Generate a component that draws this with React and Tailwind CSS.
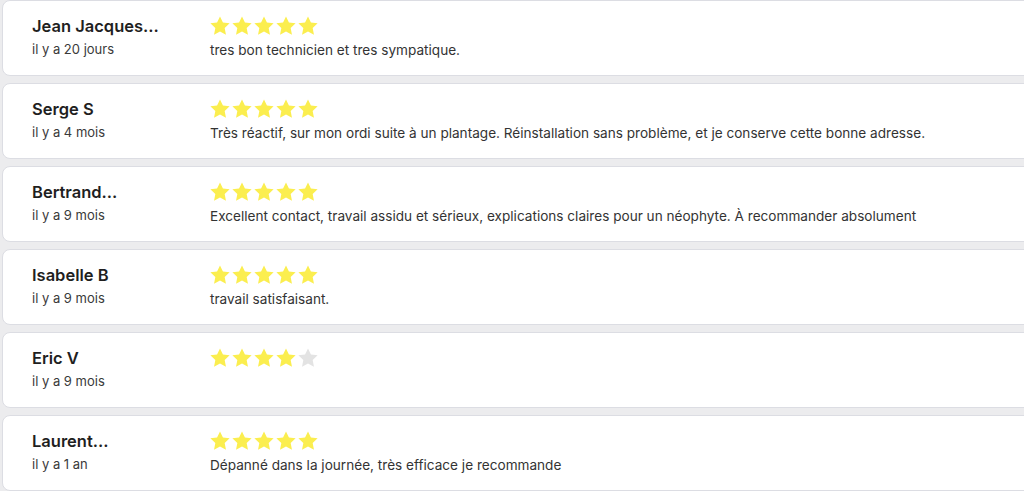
import React from "react";

const reviews = [
  { name: "Jean Jacques...", date: "il y a 20 jours", rating: 5, text: "tres bon technicien et tres sympatique." },
  { name: "Serge S", date: "il y a 4 mois", rating: 5, text: "Très réactif, sur mon ordi suite à un plantage. Réinstallation sans problème, et je conserve cette bonne adresse." },
  { name: "Bertrand...", date: "il y a 9 mois", rating: 5, text: "Excellent contact, travail assidu et sérieux, explications claires pour un néophyte. À recommander absolument" },
  { name: "Isabelle B", date: "il y a 9 mois", rating: 5, text: "travail satisfaisant." },
  { name: "Eric V", date: "il y a 9 mois", rating: 4, text: "" },
  { name: "Laurent...", date: "il y a 1 an", rating: 5, text: "Dépanné dans la journée, très efficace je recommande" },
];

const Star = ({ filled }) => (
  <svg viewBox="0 0 24 24" className="size-[22px]" fill={filled ? "#fbee4f" : "#e3e3e3"}>
    <path d="M12 1.5l3.2 6.7 7.3.9-5.4 5.1 1.4 7.3L12 18l-6.5 3.5 1.4-7.3-5.4-5.1 7.3-.9z" />
  </svg>
);

const App = () => {
  return (
    <div
      className="flex h-[491px] w-[1024px] flex-col gap-[7px] overflow-hidden bg-[#ececee]"
      style={{ fontFamily: "Inter, 'Open Sans', sans-serif" }}
    >
      {reviews.map((r, i) => (
        <div
          key={i}
          className="ml-[2px] -mr-4 flex h-[76px] shrink-0 items-start rounded-lg border border-[#dcdde3] bg-white pl-[29px] pt-[12px]"
        >
          <div className="w-[178px] shrink-0">
            <div className="text-[16.5px] font-semibold leading-[26px] text-[#1f1f1f]">{r.name}</div>
            <div className="mt-[1px] text-[13px] leading-[18px] text-[#3a3a3a]">{r.date}</div>
          </div>
          <div>
            <div className="mt-[2px] flex -ml-[1px]">
              {[0, 1, 2, 3, 4].map((s) => (
                <Star key={s} filled={s < r.rating} />
              ))}
            </div>
            <div className="mt-[4px] text-[13.6px] leading-[18px] text-[#333]">{r.text}</div>
          </div>
        </div>
      ))}
    </div>
  );
};

export default App;
